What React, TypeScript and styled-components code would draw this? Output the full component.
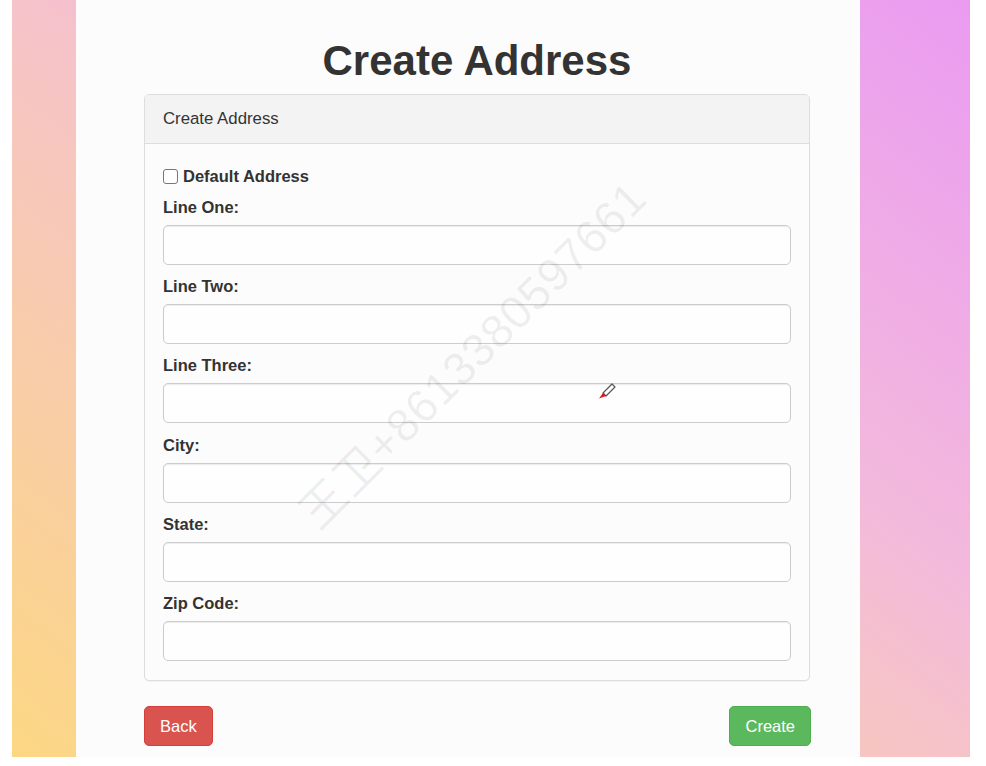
import React from "react";
import styled, { createGlobalStyle } from "styled-components";

const GlobalStyle = createGlobalStyle`
  html, body {
    margin: 0;
    padding: 0;
    background: #ffffff;
  }
  body {
    font-family: "Liberation Sans", Helvetica, Arial, sans-serif;
    color: #333333;
  }
  * { box-sizing: border-box; }
`;

const Screen = styled.div`
  width: 958px;
  height: 757px;
  margin-left: 12px;
  padding-left: 64px;
  display: flex;
  background: linear-gradient(to top right, #fcd783 0%, #f6c4c6 48%, #f3b9dc 62%, #ea9bf1 100%);
  overflow: hidden;
`;

const Content = styled.main`
  position: relative;
  width: 784px;
  height: 100%;
  background: #fcfcfc;
  padding: 38px 50px 0 68px;
  display: flex;
  flex-direction: column;
`;

const Title = styled.h1`
  margin: 0 0 10px;
  font-size: 42px;
  line-height: 46px;
  font-weight: 700;
  text-align: center;
  color: #333333;
`;

const Panel = styled.section`
  border: 1px solid #dddddd;
  border-radius: 5px;
  background: #fcfcfc;
  box-shadow: 0 1px 1px rgba(0, 0, 0, 0.04);
`;

const PanelHeading = styled.div`
  padding: 12px 18px;
  font-size: 16.8px;
  line-height: 24px;
  background: #f3f3f3;
  border-bottom: 1px solid #dddddd;
  border-radius: 4px 4px 0 0;
  color: #333333;
`;

const PanelBody = styled.div`
  padding: 22px 18px 19px;
  display: flex;
  flex-direction: column;
`;

const CheckRow = styled.label`
  display: flex;
  align-items: center;
  gap: 5px;
  height: 20px;
  margin-bottom: 11px;
  font-size: 16.5px;
  font-weight: 700;
  color: #333333;
`;

const CheckBox = styled.input`
  appearance: none;
  -webkit-appearance: none;
  margin: 0;
  width: 15px;
  height: 15px;
  border: 1px solid #767676;
  border-radius: 3px;
  background: #ffffff;
`;

const Field = styled.div<{ $last?: boolean }>`
  display: flex;
  flex-direction: column;
  margin-bottom: ${(p) => (p.$last ? "0" : "11.2px")};
`;

const Label = styled.label`
  font-size: 16.5px;
  font-weight: 700;
  line-height: 20px;
  margin-bottom: 8px;
  color: #333333;
`;

const TextInput = styled.input`
  width: 100%;
  height: 40px;
  border: 1px solid #cccccc;
  border-radius: 5px;
  background: #fefefe;
  box-shadow: inset 0 1px 1px rgba(0, 0, 0, 0.075);
  padding: 6px 14px;
  font-size: 16.5px;
  font-family: inherit;
  outline: none;
`;

const Actions = styled.div`
  display: flex;
  justify-content: space-between;
  margin-top: 25px;
  margin-right: -1px;
`;

const Button = styled.button<{ $variant: "danger" | "success" }>`
  height: 40px;
  padding: 0 15px;
  border: 1px solid ${(p) => (p.$variant === "danger" ? "#d43f3a" : "#4cae4c")};
  border-radius: 5px;
  background: ${(p) => (p.$variant === "danger" ? "#d9534f" : "#5cb85c")};
  color: #ffffff;
  font-family: inherit;
  font-size: 16.5px;
  line-height: 20px;
`;

const Watermark = styled.span`
  position: absolute;
  left: 394px;
  top: 352px;
  transform: translate(-50%, -50%) rotate(-45deg);
  white-space: nowrap;
  font-family: "Liberation Sans", "Noto Sans CJK SC", sans-serif;
  font-weight: 400;
  font-size: 46px;
  letter-spacing: 1px;
  color: rgba(0, 0, 0, 0.07);
  pointer-events: none;
`;

const Cursor = styled.svg`
  position: absolute;
  left: 521px;
  top: 382px;
`;

const fields = ["Line One:", "Line Two:", "Line Three:", "City:", "State:", "Zip Code:"];

export default function App() {
  return (
    <>
      <GlobalStyle />
      <Screen>
        <Content>
          <Title>Create Address</Title>
          <Panel>
            <PanelHeading>Create Address</PanelHeading>
            <PanelBody>
              <CheckRow>
                <CheckBox type="checkbox" />
                Default Address
              </CheckRow>
              {fields.map((f, i) => (
                <Field key={f} $last={i === fields.length - 1}>
                  <Label>{f}</Label>
                  <TextInput type="text" />
                </Field>
              ))}
            </PanelBody>
          </Panel>
          <Actions>
            <Button $variant="danger">Back</Button>
            <Button $variant="success">Create</Button>
          </Actions>
          <Watermark>王卫+8613380597661</Watermark>
          <Cursor width="20" height="18" viewBox="0 0 20 18">
            <path d="M6 11 L15 2 L18 5 L9 14 Z" fill="#ffffff" stroke="#555555" strokeWidth="1.2" strokeLinejoin="round" />
            <path d="M6 11 L9 14 L2 16.5 Z" fill="#e0141e" />
          </Cursor>
        </Content>
      </Screen>
    </>
  );
}
